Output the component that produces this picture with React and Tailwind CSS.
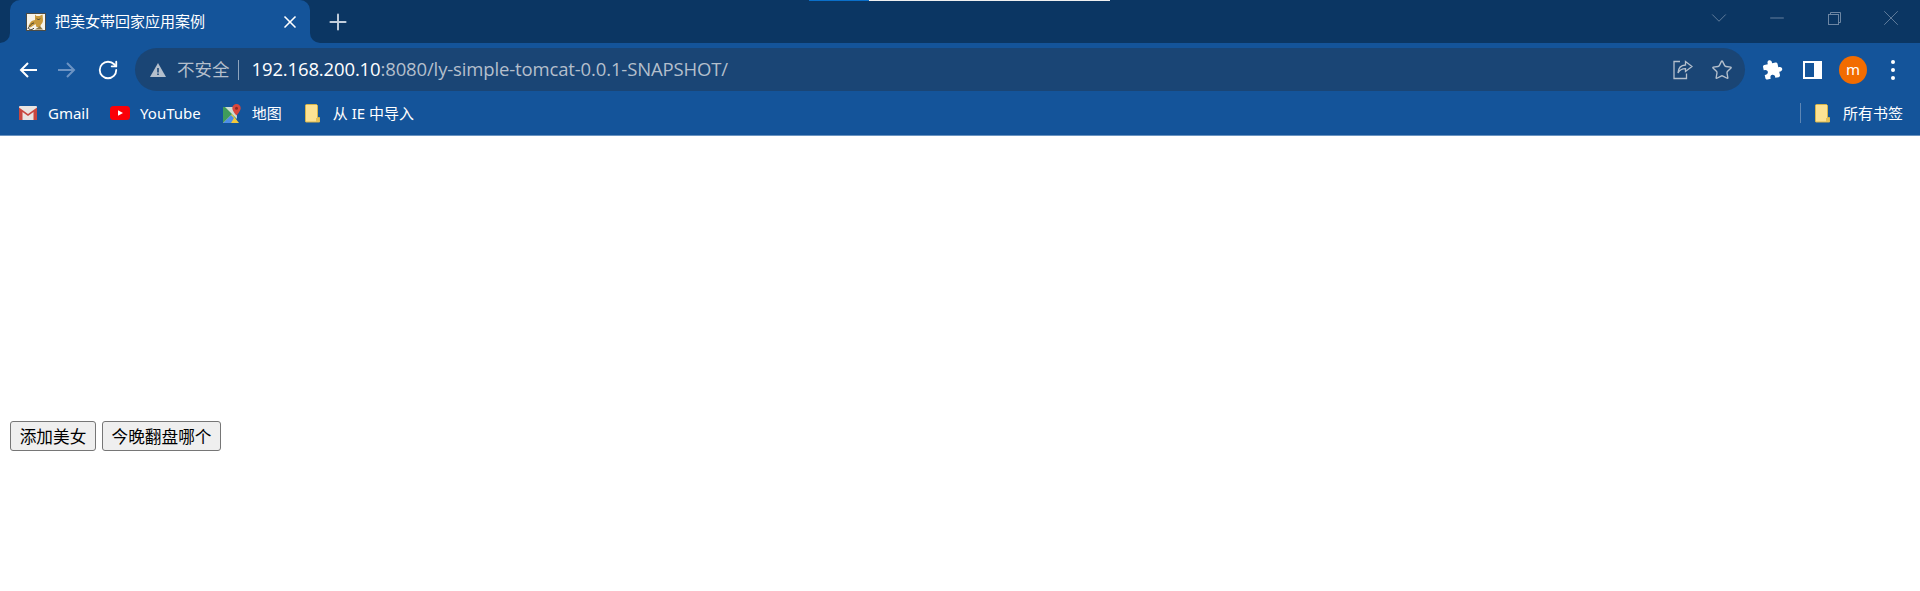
import { Star, RotateCw, X, Plus, Minus, ChevronDown } from "lucide-react";

const cjk = "font-['Noto_Sans','Noto_Sans_CJK_SC',sans-serif]";

function TomcatIcon() {
  return (
    <svg width="20" height="18" viewBox="0 0 20 18" className="shrink-0">
      <rect x="0.5" y="0.5" width="19" height="17" fill="#f6f3ea" stroke="#4b4b45" />
      <path d="M9 1.500l1.500 1.500h3L16.500 1.500 17 7c0 2-1 3.500-2 4.500l-1 2.500h-3.500l-1-3-5 3.500-2-1.500C4 9 6 7 9 7z" fill="#c99a3c" />
      <path d="M2 16c1-3 4-6 6-6M11 5.500l1.500 1.500 1.500-1.500M3 16c2 1 4 .5 5-1" fill="none" stroke="#3c3a30" strokeWidth="1" />
      <path d="M14 13l3 3.500H9z" fill="#8f7b48" />
    </svg>
  );
}

function GmailIcon() {
  return (
    <svg width="18" height="14" viewBox="0 0 18 14" className="shrink-0">
      <rect width="18" height="14" rx="1" fill="#e9e5e2" />
      <path d="M0 1.500 9 8l9-6.500V14h-3.500V6L9 10 3.500 6v8H0z" fill="#c9473f" />
    </svg>
  );
}

function YoutubeIcon() {
  return (
    <svg width="20" height="14" viewBox="0 0 20 14" className="shrink-0">
      <rect width="20" height="14" rx="3.500" fill="#fb0007" />
      <path d="M8 4.200 13 7l-5 2.800z" fill="#fff" />
    </svg>
  );
}

function MapsIcon() {
  return (
    <svg width="18" height="19" viewBox="0 0 18 19" className="shrink-0">
      <path d="M0 3h13v16H0z" fill="#3f9c5a" />
      <path d="M0 19 9 10l7 9z" fill="#f4c93a" />
      <path d="M0 19 8 11l3 3-3 5z" fill="#4f8fe8" />
      <path d="M2 3 14 15V3z" fill="#e8e8e8" opacity="0.85" />
      <path d="M13.500 0a4.200 4.200 0 0 1 4.200 4.200c0 2.800-4.200 7.300-4.200 7.300S9.300 7 9.300 4.200A4.200 4.200 0 0 1 13.500 0z" fill="#d9473c" />
      <circle cx="13.500" cy="4.200" r="1.500" fill="#8e2a24" />
    </svg>
  );
}

function FolderIcon() {
  return (
    <svg width="15" height="19" viewBox="0 0 15 19" className="shrink-0">
      <path d="M1.500.5h10l1 1v12l2 0v4.500h-13.500a.5.5 0 0 1-.5-.5V1z" fill="#fde293" stroke="#d8b548" />
      <path d="M11 18v-4h3.500v4z" fill="#e6c25a" />
    </svg>
  );
}

function ShareIcon() {
  return (
    <svg width="20" height="20" viewBox="0 0 20 20" fill="none" stroke="#b4bfcc" strokeWidth="1.300" className="shrink-0">
      <path d="M7 1.500H1v17h12.500v-5" />
      <path d="M12.500 1.500 19 6.500l-6.500 5V8.700C9 8.700 6.500 10 5 13c.3-4.800 3-7.800 7.500-8z" />
    </svg>
  );
}

function PuzzleIcon() {
  return (
    <svg width="21" height="21" viewBox="0 0 24 24" fill="#fff" className="shrink-0 -rotate-12">
      <path d="M20.500 11H19V7c0-1.100-.9-2-2-2h-4V3.500C13 2.120 11.880 1 10.500 1S8 2.120 8 3.500V5H4c-1.100 0-1.990.9-1.990 2v3.800H3.500c1.490 0 2.700 1.210 2.700 2.700s-1.210 2.700-2.700 2.700H2V20c0 1.100.9 2 2 2h3.800v-1.500c0-1.490 1.210-2.700 2.700-2.700 1.490 0 2.700 1.210 2.700 2.700V22H17c1.100 0 2-.9 2-2v-4h1.500c1.380 0 2.500-1.120 2.500-2.500S21.880 11 20.500 11z" />
    </svg>
  );
}

function NavArrow({ flip, color }) {
  return (
    <svg width="18" height="16" viewBox="0 0 18 16" fill="none" stroke={color} strokeWidth="2" className={flip ? "rotate-180" : ""}>
      <path d="M18 8H2M9 1 2 8l7 7" />
    </svg>
  );
}

function TabBar() {
  return (
    <div className="relative flex h-[43px] items-stretch bg-[#0b3663]">
      {/* loading strip on top of the window */}
      <div className="absolute left-[809px] top-0 flex h-px">
        <div className="h-px w-[60px] bg-[#0a6fc9]" />
        <div className="h-px w-[241px] bg-[#f0f0f0]" />
      </div>
      <div className="h-[10px] w-[10px] self-end bg-[#14549a]">
        <div className="h-full w-full rounded-br-[10px] bg-[#0b3663]" />
      </div>
      <div className="flex w-[300px] items-center rounded-t-[10px] bg-[#14549a] pl-[16px] pr-[10px]">
        <TomcatIcon />
        <span className={`ml-[9px] flex-1 text-[15px] leading-none text-white ${cjk}`}>把美女带回家应用案例</span>
        <X size={20} strokeWidth={2} color="#fff" />
      </div>
      <div className="h-[10px] w-[10px] self-end bg-[#14549a]">
        <div className="h-full w-full rounded-bl-[10px] bg-[#0b3663]" />
      </div>
      <div className="ml-[5px] flex items-center">
        <Plus size={26} strokeWidth={1.800} color="#c3cfdd" />
      </div>
      <div className="ml-auto flex items-center pb-[7px]">
        <div className="flex w-[58px] justify-center"><ChevronDown size={26} strokeWidth={0.8} color="#6d86a3" /></div>
        <div className="flex w-[58px] justify-center"><Minus size={22} strokeWidth={1} color="#6d86a3" /></div>
        <div className="flex w-[56px] justify-center">
          <svg width="13" height="13" viewBox="0 0 13 13" fill="none" stroke="#6d86a3">
            <rect x="0.500" y="2.500" width="10" height="10" />
            <path d="M2.500 2.500V.5h10v10h-2" />
          </svg>
        </div>
        <div className="flex w-[58px] justify-center"><X size={26} strokeWidth={0.8} color="#6d86a3" /></div>
      </div>
    </div>
  );
}

function ToolBar() {
  return (
    <div className="flex h-[48px] items-start bg-[#14549a] pl-[8px]">
      <div className="mt-[5px] flex h-[43px] items-center">
        <div className="flex w-[39px] justify-center"><NavArrow color="#fff" /></div>
        <div className="flex w-[40px] justify-center"><NavArrow flip color="#6c93c3" /></div>
        <div className="flex w-[41px] justify-center"><RotateCw size={22} strokeWidth={2} color="#fff" /></div>
      </div>
      <div className="ml-[7px] mt-[5px] flex h-[43px] w-[1610px] items-center rounded-full bg-[#1a4575] pl-[15px] pr-[12px]">
        <svg width="16" height="14" viewBox="0 0 16 14" className="shrink-0">
          <path d="M8 0l8 14H0z" fill="#b4bfcc" />
          <path d="M7.200 5h1.600v4.500H7.200zM7.200 10.500h1.600V12H7.200z" fill="#1a4575" />
        </svg>
        <span className={`ml-[11px] text-[17.500px] leading-none text-[#b4bfcc] ${cjk}`}>不安全</span>
        <div className="ml-[8px] h-[20px] w-px bg-[#8ea4bd]" />
        <span className="ml-[13px] font-['Open_Sans',sans-serif] text-[18.500px] leading-none tracking-[-0.14px] text-white">
          192.168.200.10<span className="text-[#b4bfcc]">:8080/ly-simple-tomcat-0.0.1-SNAPSHOT/</span>
        </span>
        <div className="ml-auto flex items-center gap-[18px]">
          <ShareIcon />
          <Star size={22} strokeWidth={1.500} color="#b4bfcc" />
        </div>
      </div>
      <div className="ml-[8px] flex h-[53px] items-center">
        <div className="flex w-[39px] justify-center"><PuzzleIcon /></div>
        <div className="flex w-[41px] justify-center">
          <div className="h-[18px] w-[19px] border-2 border-r-[8px] border-white" />
        </div>
        <div className="flex w-[40px] justify-center">
          <div className="flex h-[28px] w-[28px] items-center justify-center rounded-full bg-[#f26c00] font-['Noto_Sans',sans-serif] text-[15px] leading-none text-white">m</div>
        </div>
        <div className="flex w-[40px] flex-col items-center gap-[4px]">
          <div className="h-[4px] w-[4px] rounded-full bg-white" />
          <div className="h-[4px] w-[4px] rounded-full bg-white" />
          <div className="h-[4px] w-[4px] rounded-full bg-white" />
        </div>
      </div>
    </div>
  );
}

function BookmarkBar() {
  return (
    <div className={`flex h-[45px] items-center border-b border-[#6a93c0] bg-[#14549a] pl-[19px] pr-[17px] text-[15px] leading-none text-white ${cjk}`}>
      <GmailIcon />
      <span className="ml-[11px]">Gmail</span>
      <div className="ml-[21px]"><YoutubeIcon /></div>
      <span className="ml-[10px]">YouTube</span>
      <div className="ml-[22px]"><MapsIcon /></div>
      <span className="ml-[11px]">地图</span>
      <div className="ml-[23px]"><FolderIcon /></div>
      <span className="ml-[13px]">从 IE 中导入</span>
      <div className="ml-auto h-[20px] w-px bg-[#5d86b5]" />
      <div className="ml-[14px]"><FolderIcon /></div>
      <span className="ml-[13px]">所有书签</span>
    </div>
  );
}

export default function App() {
  return (
    <div className="flex h-[591px] w-[1920px] flex-col overflow-hidden bg-white">
      <TabBar />
      <ToolBar />
      <BookmarkBar />
      {/* page body */}
      <div className="flex gap-[6px] pl-[10px] pt-[285px]">
        <button className={`h-[30px] w-[86px] rounded-[3px] border border-[#767676] bg-[#efefef] pt-[2px] text-[16.670px] leading-none text-black ${cjk}`}>添加美女</button>
        <button className={`h-[30px] w-[119px] rounded-[3px] border border-[#767676] bg-[#efefef] pt-[2px] text-[16.670px] leading-none text-black ${cjk}`}>今晚翻盘哪个</button>
      </div>
    </div>
  );
}
